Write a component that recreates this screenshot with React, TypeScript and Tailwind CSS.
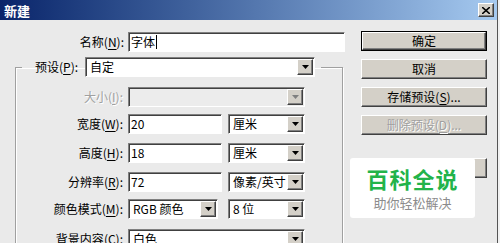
import React from "react"

const raised =
    "bg-[#d4d0c8] border border-t-white border-l-white border-r-[#404040] border-b-[#404040] shadow-[inset_-1px_-1px_0_#808080]"
const sunken =
    "border border-t-[#808080] border-l-[#808080] border-r-white border-b-white shadow-[inset_1px_1px_0_#404040]"

function Label({ pre, k, disabled }: { pre: string; k: string; disabled?: boolean }) {
    return (
        <span className={disabled ? "text-[#a0a0a0] [text-shadow:1px_1px_0_#fff]" : "text-black"}>
            {pre}(<span className="underline underline-offset-2">{k}</span>):
        </span>
    )
}

function Arrow({ disabled }: { disabled?: boolean }) {
    return (
        <div className={`${raised} w-4 h-4 flex items-center justify-center shrink-0`}>
            <svg width="7" height="4" viewBox="0 0 7 4">
                <path d="M0 0h7L3.5 4z" fill={disabled ? "#808080" : "#000"} />
            </svg>
        </div>
    )
}

function Input({ value, w, caret }: { value: string; w: string; caret?: boolean }) {
    return (
        <div className={`${sunken} ${w} h-5 bg-white flex items-center pl-[2px]`}>
            {value}
            {caret && <span className="ml-[1px] w-px h-[14px] bg-black" />}
        </div>
    )
}

function Select({ value, w, disabled }: { value: string; w: string; disabled?: boolean }) {
    return (
        <div
            className={`${sunken} ${w} h-5 ${disabled ? "bg-[#ececec]" : "bg-white"} flex items-center justify-between pl-[4px] pr-[1px]`}
        >
            <span className="whitespace-nowrap">{value}</span>
            <Arrow disabled={disabled} />
        </div>
    )
}

function Button({ children, def, disabled }: { children?: React.ReactNode; def?: boolean; disabled?: boolean }) {
    return (
        <div className={`w-[126px] h-5 ${def ? "border border-black" : ""}`}>
            <div
                className={`${raised} h-full flex items-center justify-center ${disabled ? "text-[#a0a0a0] [text-shadow:1px_1px_0_#fff]" : "text-black"}`}
            >
                {children}
            </div>
        </div>
    )
}

function Row({ label, mt, children }: { label: React.ReactNode; mt: string; children: React.ReactNode }) {
    return (
        <div className={`flex items-center h-5 ${mt}`}>
            <div className="w-[108px] text-right pr-[1px]">{label}</div>
            <div className="ml-[4px] flex gap-[6px]">{children}</div>
        </div>
    )
}

export default function App() {
    return (
        <div className="relative w-[500px] h-[243px] overflow-hidden bg-[#f2f2f2] font-['Noto_Sans_CJK_SC','Noto_Sans',sans-serif] text-[12px] leading-none">
            <div className="w-[498px] h-full bg-[#eaeaea] border-r border-[#555]">
                {/* title bar */}
                <div className="h-5 flex items-center justify-between bg-gradient-to-r from-[#0a246a] to-[#a6caf0] pl-[4px] pr-[3px]">
                    <span className="text-white font-bold text-[13px]">新建</span>
                    <div className={`${raised} w-4 h-[14px] flex items-center justify-center`}>
                        <svg width="8" height="7" viewBox="0 0 8 7">
                            <path d="M0 0l8 7M8 0L0 7" stroke="#000" strokeWidth="1.6" />
                        </svg>
                    </div>
                </div>

                <div className="flex">
                    {/* left */}
                    <div className="w-[345px]">
                        <div className="flex items-center h-5 mt-[12px]">
                            <div className="w-[124px] text-right">
                                <Label pre="名称" k="N" />
                            </div>
                            <div className="ml-[4px]">
                                <Input value="字体" w="w-[217px]" caret />
                            </div>
                        </div>

                        <fieldset className="ml-[15px] mt-[5px] w-[328px] border border-[#a0a0a0] shadow-[inset_1px_1px_0_#fff,1px_1px_0_#fff] pb-4">
                            <legend className="ml-[6px] pl-[13px] pr-[6px]">
                                <div className="flex items-center h-5">
                                    <div className="w-[47px]">
                                        <Label pre="预设" k="P" />
                                    </div>
                                    <div className="ml-[3px]">
                                        <Select value="自定" w="w-[230px]" />
                                    </div>
                                </div>
                            </legend>

                            <Row mt="mt-[10px]" label={<Label pre="大小" k="I" disabled />}>
                                <Select value="" w="w-[177px]" disabled />
                            </Row>
                            <Row mt="mt-[7px]" label={<Label pre="宽度" k="W" />}>
                                <Input value="20" w="w-[94px]" />
                                <Select value="厘米" w="w-[77px]" />
                            </Row>
                            <Row mt="mt-[9px]" label={<Label pre="高度" k="H" />}>
                                <Input value="18" w="w-[94px]" />
                                <Select value="厘米" w="w-[77px]" />
                            </Row>
                            <Row mt="mt-[9px]" label={<Label pre="分辨率" k="R" />}>
                                <Input value="72" w="w-[94px]" />
                                <Select value="像素/英寸" w="w-[77px]" />
                            </Row>
                            <Row mt="mt-[7px]" label={<Label pre="颜色模式" k="M" />}>
                                <div className="flex gap-[10px]">
                                    <Select value="RGB 颜色" w="w-[90px]" />
                                    <Select value="8 位" w="w-[77px]" />
                                </div>
                            </Row>
                            <Row mt="mt-[10px]" label={<Label pre="背景内容" k="C" />}>
                                <Select value="白色" w="w-[177px]" />
                            </Row>
                        </fieldset>
                    </div>

                    {/* right */}
                    <div className="ml-[16px] mt-[11px] flex flex-col gap-2">
                        <Button def>确定</Button>
                        <Button>取消</Button>
                        <Button>
                            存储预设(<span className="underline underline-offset-2">S</span>)...
                        </Button>
                        <Button disabled>
                            删除预设(<span className="underline underline-offset-2">D</span>)...
                        </Button>
                        <div className="mt-[15px]">
                            <Button />
                        </div>
                    </div>
                </div>
            </div>

            {/* watermark */}
            <div className="absolute left-[350px] top-[158px] w-[125px] h-[60px] bg-white rounded-[3px] flex flex-col items-center justify-center">
                <span className="text-[#22b34a] font-bold text-[22px] leading-none tracking-[1px]">百科全说</span>
                <span className="text-[#8c8c8c] text-[13px] leading-none mt-[7px]">助你轻松解决</span>
            </div>
        </div>
    )
}
